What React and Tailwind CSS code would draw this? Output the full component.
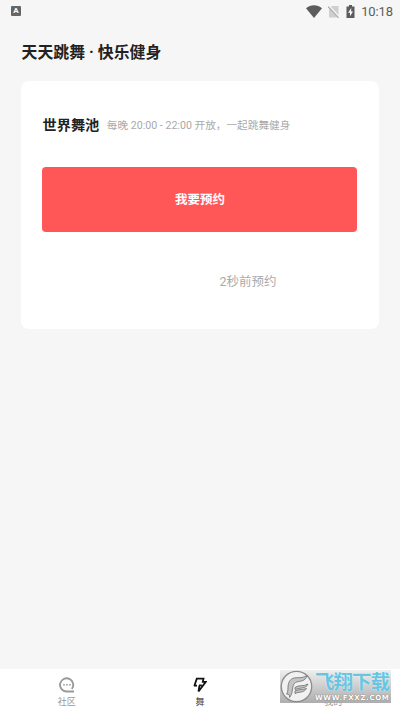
function StatusBar() {
  return (
    <div className="flex h-[22px] shrink-0 items-center justify-between pl-[11px] pr-[7px]">
      <div className="flex h-[10px] w-[10px] items-center justify-center rounded-[1px] bg-[#666] text-[8px] font-bold leading-none text-white">
        A
      </div>
      <div className="flex items-center text-[#5c5c5c]">
        <svg className="h-[13px] w-[16px]" viewBox="0 0 15 12" fill="currentColor">
          <path d="M0 3C4.2-.8 10.800-.8 15 3L7.500 12Z" />
        </svg>
        <svg className="ml-[6px] h-[13px] w-[11px]" viewBox="0 0 11 13">
          <path d="M3.500 1H10.500V12.500H1V4Z" fill="#cfcfcf" />
          <path d="M1 .5L11 11.500" stroke="#f6f6f6" strokeWidth="1.200" />
          <path d="M0 1.500L10.500 12.800" stroke="#b2b2b2" strokeWidth="1.200" />
        </svg>
        <svg className="ml-[7px] h-[13px] w-[9px]" viewBox="0 0 9 13">
          <path d="M3 0H6V1.500H8.500V13H.5V1.500H3Z" fill="currentColor" />
          <path d="M5.200 3L2 7.800H4V11.300L7 6.500H5.200Z" fill="#f7f7f7" />
        </svg>
        <span className="ml-[6px] text-[13px] leading-none tracking-[-0.1px]">10:18</span>
      </div>
    </div>
  );
}

function PoolCard() {
  return (
    <div className="mx-[21px] mt-[16px] h-[248px] rounded-[8px] bg-white px-[21px] pt-[33px]">
      <div className="flex h-[24px] items-center">
        <h2 className="ml-[0.5px] text-[14.2px] font-bold text-[#222]">世界舞池</h2>
        <p className="ml-[7.500px] whitespace-nowrap text-[10.650px] text-[#aaa]">
          每晚 20:00 - 22:00 开放，一起跳舞健身
        </p>
      </div>
      <button className="mt-[29px] flex h-[65px] w-[315px] items-center justify-center rounded-[4px] bg-[#ff5757] pt-[2px] pl-px text-[12.500px] font-bold text-white">
        我要预约
      </button>
      <p className="ml-[177.500px] mt-[40px] text-[12.500px] leading-[20px] text-[#aaa]">2秒前预约</p>
    </div>
  );
}

function TabBar() {
  return (
    <div className="grid h-[43px] shrink-0 grid-cols-3 bg-white text-[9px] leading-[12px] text-[#999]">
      <div className="flex flex-col items-center pt-[8px]">
        <svg className="h-[16px] w-[16px]" viewBox="0 0 16 16" fill="none">
          <path d="M15 14.500H7.800A6.600 6.600 0 1 1 12.800 12" stroke="#999" strokeWidth="1.900" />
          <g fill="#999">
            <circle cx="5" cy="7.800" r=".9" />
            <circle cx="8" cy="7.800" r=".9" />
            <circle cx="11" cy="7.800" r=".9" />
          </g>
        </svg>
        <span className="mt-[3px]">社区</span>
      </div>
      <div className="flex flex-col items-center pt-[8px] text-[#444]">
        <svg className="h-[16px] w-[14px]" viewBox="0 0 14 16" fill="none">
          <path d="M1.300 9L3.800 1.700H10.500L9.800 4.800H12.800L5.500 14.500L6.500 8.300M.8 8.700H4M6 8.300H8.800" stroke="#111" strokeWidth="1.800" />
        </svg>
        <span className="mt-[3px]">舞</span>
      </div>
      <div className="flex flex-col items-center pt-[27px]">
        <span>我的</span>
      </div>
    </div>
  );
}

function Watermark() {
  return (
    <div className="absolute bottom-[9px] right-[9px] flex h-[33px] w-[111px] bg-linear-to-b from-[#ededed]/90 to-[#a9a9a9]/95">
      <svg className="h-[33px] w-[33px] shrink-0" viewBox="0 0 33 33">
        <circle cx="16.500" cy="16.500" r="15.200" fill="#f1f1f1" stroke="#8c8c8c" strokeWidth="1.300" />
        <g fill="#c4c4c4" stroke="#777" strokeWidth=".9">
          <path d="M6.500 24C9.500 21 6 14 11 9.500C15 6 21 9.500 27 5.500C25 12.500 19 10.500 15.500 12.500C11 15.500 14 22 9.500 27.500C10 25 9 24 6.500 24Z" />
          <path d="M15 17.500C19 14.500 23 17 28 14C26.500 18.500 21 17.500 15 19.500Z" />
          <path d="M15 21C19 19 22 20 26.500 18.500C24 23 19 21.500 15 23.500Z" />
        </g>
      </svg>
      <div className="ml-[2px] flex flex-col items-start whitespace-nowrap">
        <span className="mt-[1px] text-[19.500px] font-bold leading-[24px] tracking-[-1px] text-[#67c5e2] text-shadow-[0_0_1px_#fff]">
          飞翔下载
        </span>
        <span className="font-['DejaVu_Sans'] text-[7px] font-bold leading-[7px] tracking-[0.650px] text-white text-shadow-[0_0_1px_#555]">
          WWW.FXXZ.COM
        </span>
      </div>
    </div>
  );
}

export default function App() {
  return (
    <div className="relative flex h-[712px] w-[400px] flex-col overflow-hidden bg-[#f6f6f6] font-[Roboto,'Noto_Sans_CJK_SC',sans-serif]">
      <StatusBar />
      <h1 className="ml-[21.500px] mt-[18px] text-[15.900px] font-bold leading-[25px] text-[#222]">
        天天跳舞 · 快乐健身
      </h1>
      <PoolCard />
      <div className="flex-1" />
      <TabBar />
      <Watermark />
    </div>
  );
}
